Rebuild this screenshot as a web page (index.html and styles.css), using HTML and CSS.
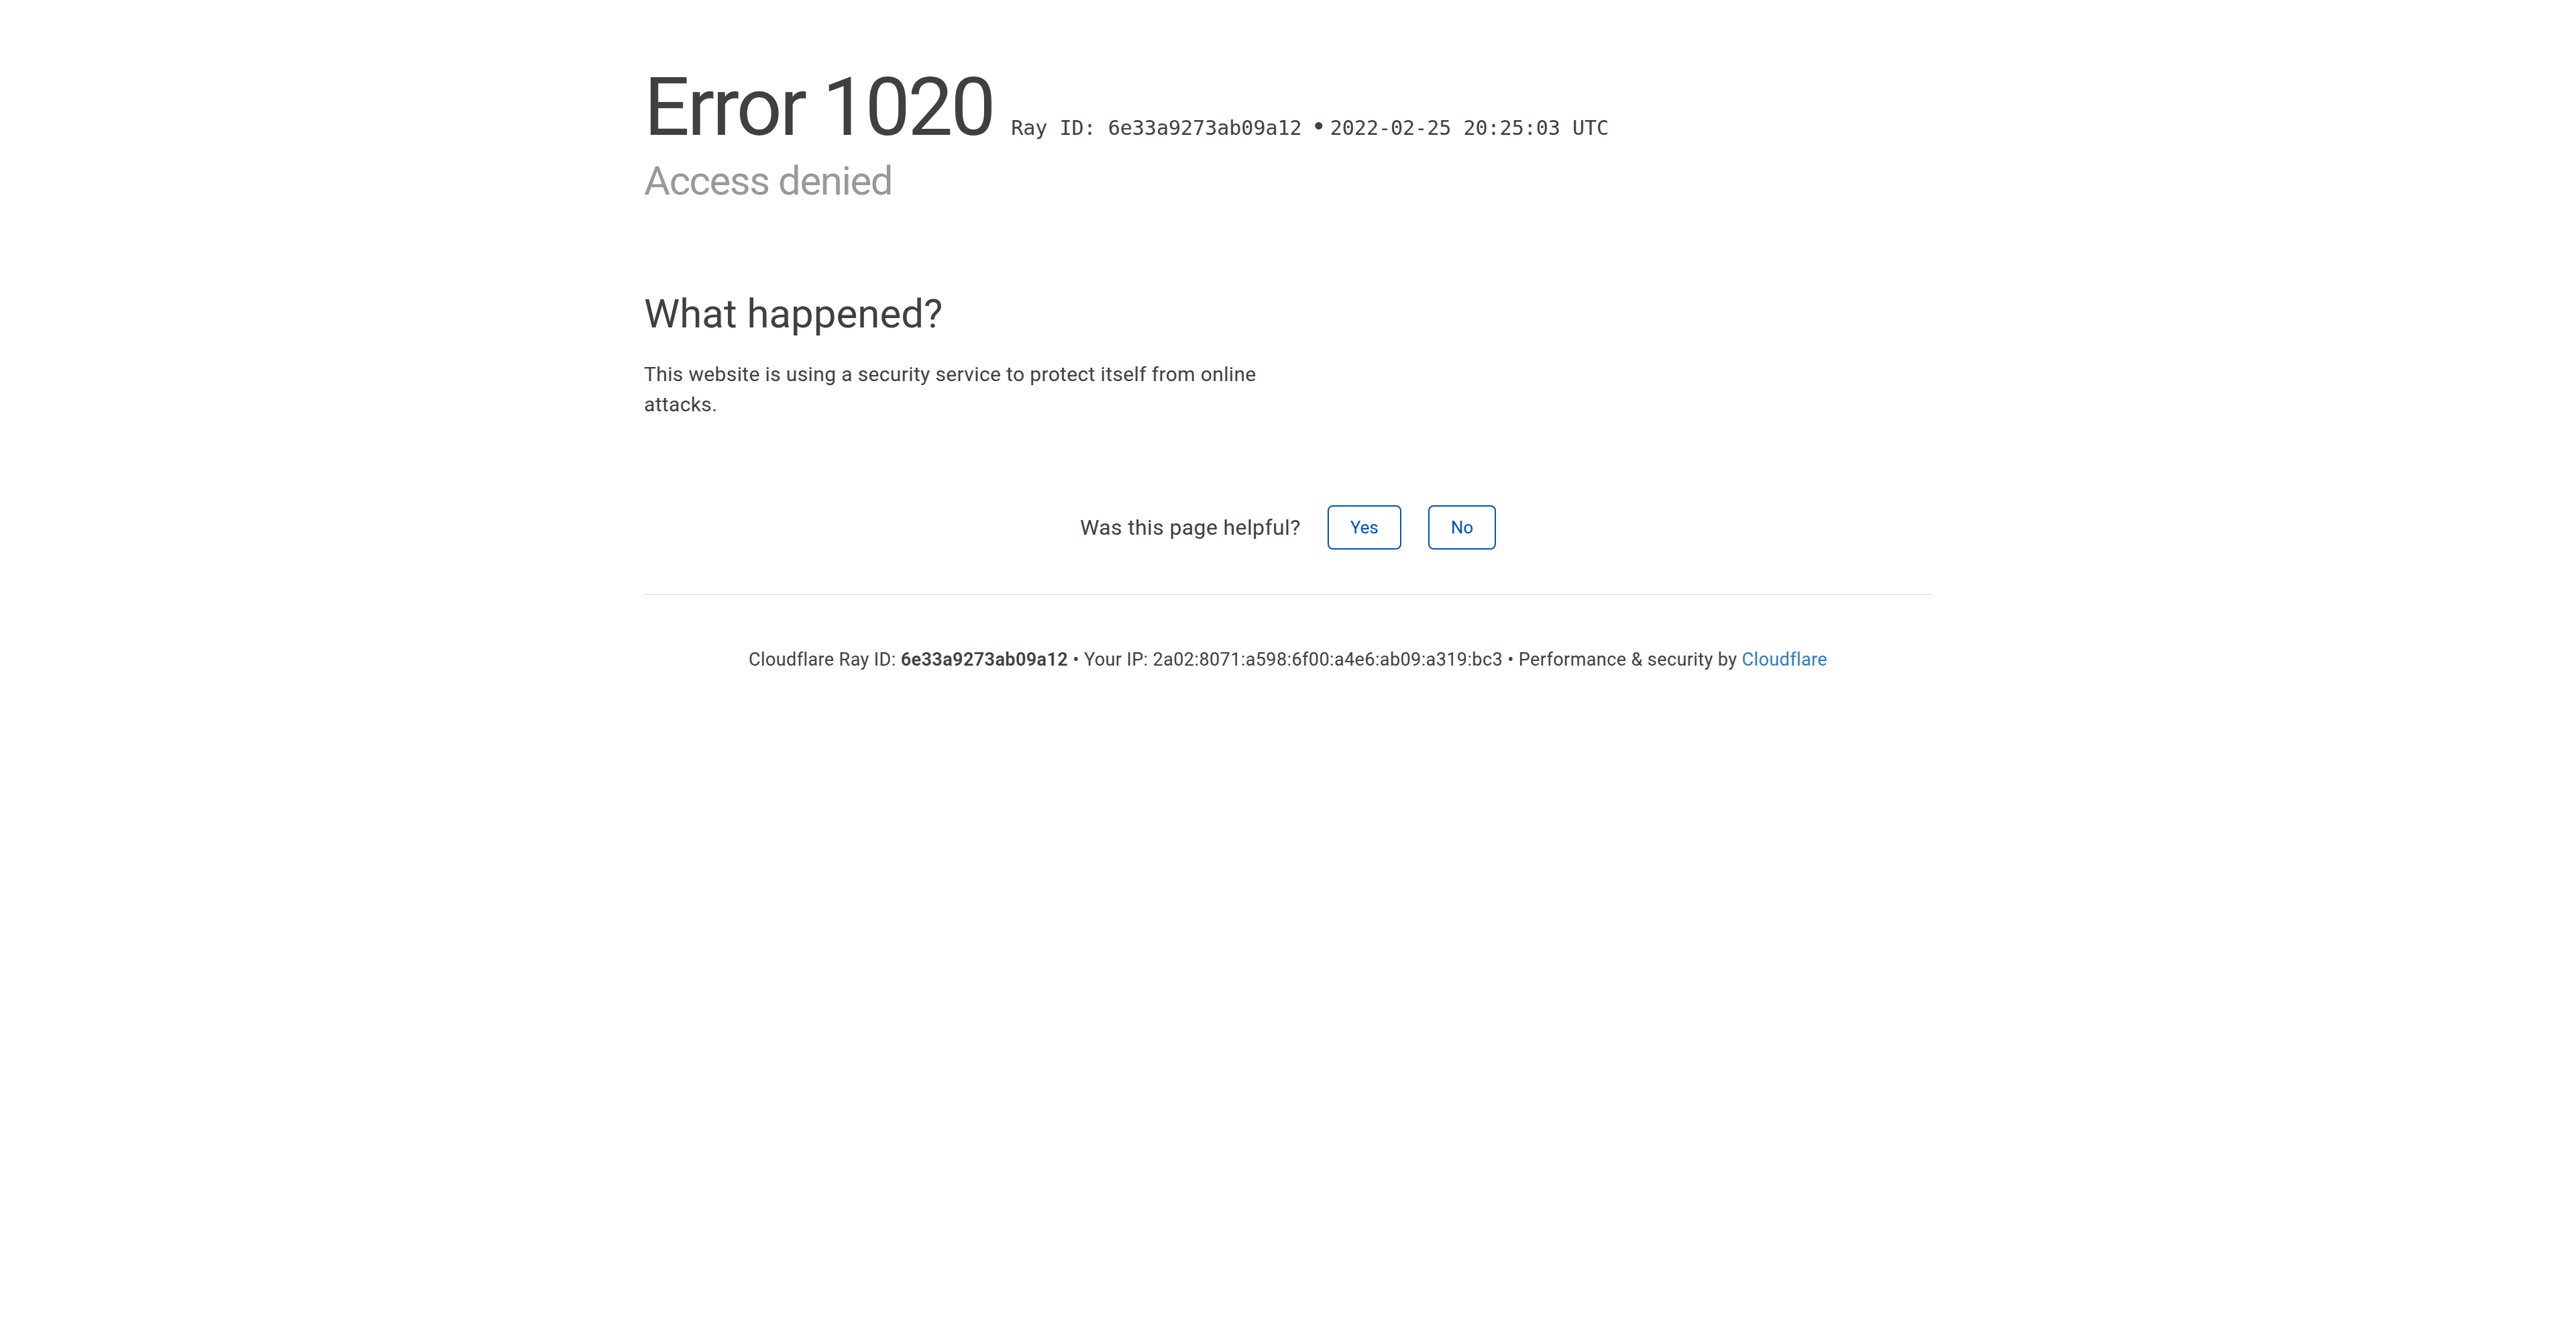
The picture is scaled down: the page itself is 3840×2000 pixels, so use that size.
FILE: index.html
```html
<!DOCTYPE html>
<html lang="en">
<head>
<meta charset="utf-8">
<title>Access denied | Cloudflare</title>
<link rel="stylesheet" href="styles.css">
</head>
<body>
<div class="page">
  <header class="overview">
    <h1 class="title"><span class="code">Error 1020</span> <small class="ray">Ray ID: 6e33a9273ab09a12 <span class="ray-dot">&bull;</span>2022-02-25 20:25:03 UTC</small></h1>
    <h2 class="subhead">Access denied</h2>
  </header>
  <section class="details">
    <h2 class="section-title">What happened?</h2>
    <p class="section-text">This website is using a security service to protect itself from online attacks.</p>
  </section>
  <div class="feedback">
    <span class="feedback-q">Was this page helpful?</span>
    <button class="fb-btn" type="button">Yes</button>
    <button class="fb-btn" type="button">No</button>
  </div>
  <footer class="footer">
    <p><span>Cloudflare Ray ID: <strong>6e33a9273ab09a12</strong></span> <span class="sep">&bull;</span> <span>Your IP: 2a02:8071:a598:6f00:a4e6:ab09:a319:bc3</span> <span class="sep">&bull;</span> <span>Performance &amp; security by <a href="#">Cloudflare</a></span></p>
  </footer>
</div>
</body>
</html>
```

FILE: styles.css
```css
* { box-sizing: border-box; }

html, body {
  margin: 0;
  padding: 0;
  background: #ffffff;
}

body {
  font-family: Roboto, "Helvetica Neue", Arial, sans-serif;
  color: #404040;
}

.page {
  width: 1920px;
  margin: 0 auto;
  padding-top: 100px;
}

.title {
  margin: 0;
  font-size: 120px;
  line-height: 120px;
  font-weight: 400;
  letter-spacing: -0.03em;
  white-space: nowrap;
}

.ray {
  font-family: "DejaVu Sans Mono", "Liberation Mono", monospace;
  font-size: 30px;
  line-height: 1;
  font-weight: 400;
  letter-spacing: 0;
}

.ray-dot {
  font-family: "Liberation Sans", Arial, sans-serif;
  font-size: 40px;
  line-height: 1;
  margin-right: 10px;
}

.subhead {
  margin: 20px 0 0;
  font-size: 60px;
  line-height: 60px;
  font-weight: 400;
  color: #999999;
  letter-spacing: -0.025em;
}

.section-title {
  margin: 138px 0 0;
  font-size: 60px;
  line-height: 60px;
  font-weight: 400;
}

.section-text {
  margin: 37px 0 0;
  max-width: 960px;
  font-size: 30px;
  line-height: 45px;
  letter-spacing: 0.012em;
}

.feedback {
  display: flex;
  justify-content: center;
  align-items: center;
  gap: 40px;
  margin-top: 128px;
  height: 66px;
}

.feedback-q {
  font-size: 32px;
  letter-spacing: 0.012em;
}

.fb-btn {
  height: 66px;
  padding: 0 32px;
  border: 2px solid #0051c3;
  border-radius: 8px;
  background: #ffffff;
  color: #0051c3;
  font-family: inherit;
  font-size: 26px;
  cursor: pointer;
}

.footer {
  margin-top: 66px;
  border-top: 2px solid #e8e8e8;
  padding-top: 77px;
  text-align: center;
  font-size: 27px;
  line-height: 39px;
  letter-spacing: 0.015em;
}

.footer p { margin: 0; }

.footer strong { font-weight: 600; }

.footer a {
  color: #2f7bbf;
  text-decoration: none;
}
```
